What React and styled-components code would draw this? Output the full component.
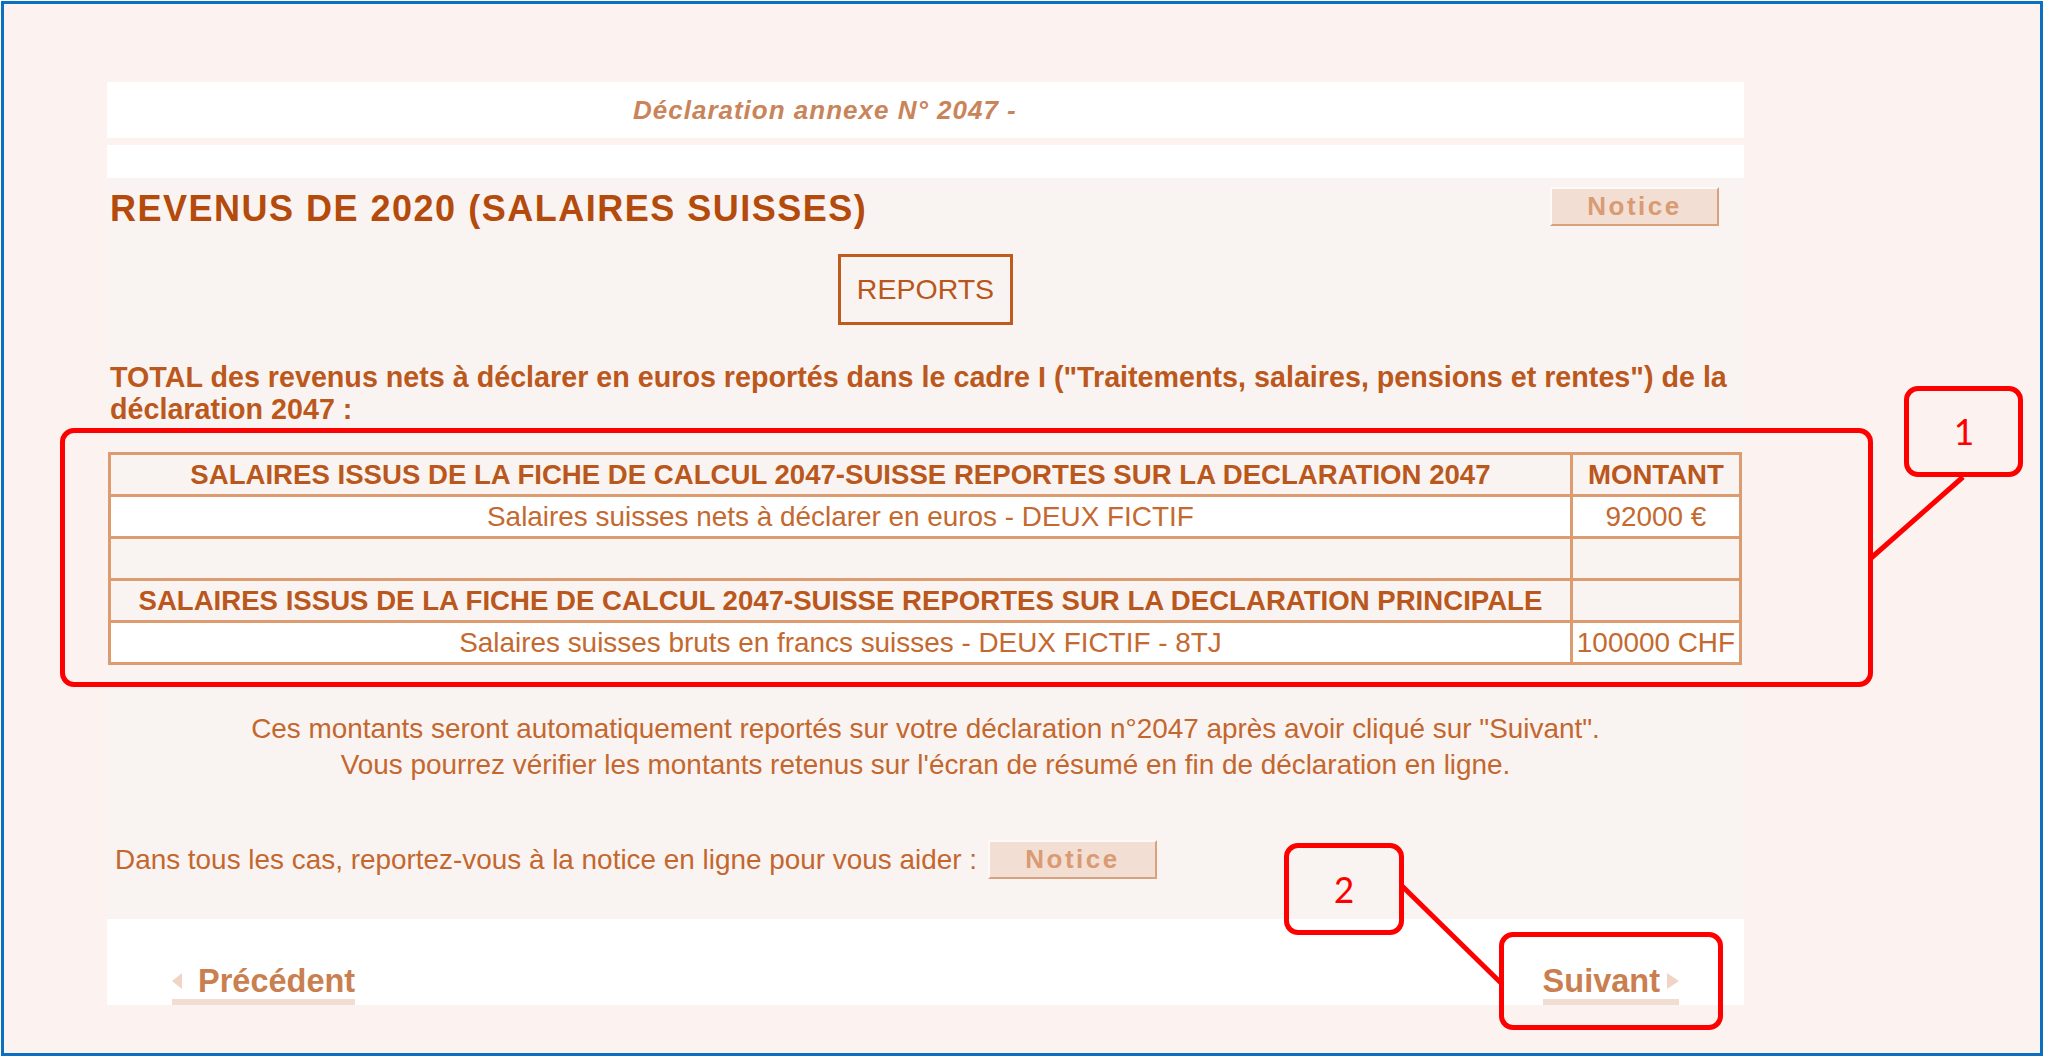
import React from "react";
import styled, { createGlobalStyle } from "styled-components";

const GlobalStyle = createGlobalStyle`
  body {
    margin: 0;
    background: #ffffff;
    font-family: "Liberation Sans", Arial, sans-serif;
  }
`;

const Frame = styled.div`
  position: relative;
  box-sizing: border-box;
  width: 2042px;
  height: 1055px;
  margin: 1px 0 0 1px;
  border: 3px solid #0b70c1;
  background: #fcf3f0;
  padding: 78px 0 0 103px;
`;

const Column = styled.div`
  width: 1637px;
  display: flex;
  flex-direction: column;
`;

const Band = styled.div`
  background: #ffffff;
  height: ${(p) => p.h}px;
  margin-top: ${(p) => p.mt || 0}px;
  display: flex;
  align-items: center;
`;

const DocTitle = styled.span`
  padding-left: 526px;
  font-size: 26px;
  letter-spacing: 1px;
  font-weight: bold;
  font-style: italic;
  color: #c9845a;
`;

const Content = styled.div`
  background: #f9f4f1;
  height: 741px;
  display: flex;
  flex-direction: column;
`;

const TitleRow = styled.div`
  display: flex;
  justify-content: space-between;
  align-items: flex-start;
  padding: 9px 25px 0 3px;
`;

const PageTitle = styled.h1`
  margin: 0;
  padding-top: 3px;
  font-size: 36px;
  letter-spacing: 1.5px;
  line-height: 38px;
  font-weight: bold;
  color: #b44a0c;
`;

const NoticeButton = styled.button`
  box-sizing: border-box;
  width: 169px;
  height: 39px;
  padding: 0;
  background: #f3ded3;
  border: 2px solid;
  border-color: #fffaf7 #d9a27f #d9a27f #fffaf7;
  font-family: "Liberation Sans", Arial, sans-serif;
  font-size: 26px;
  font-weight: bold;
  letter-spacing: 2.5px;
  color: #d99b74;
`;

const ReportsBox = styled.div`
  box-sizing: border-box;
  align-self: center;
  width: 175px;
  height: 71px;
  margin-top: 26px;
  border: 3px solid #bf5b1c;
  display: flex;
  align-items: center;
  justify-content: center;
  font-size: 28.5px;
  color: #b9561a;
`;

const Lead = styled.p`
  margin: 36px 0 0;
  padding-left: 3px;
  font-size: 28.7px;
  line-height: 32px;
  font-weight: bold;
  color: #bc581c;
`;

const Table = styled.table`
  margin: 27px 0 0 1px;
  width: 1634px;
  border-collapse: collapse;
`;

const Cell = styled.td`
  height: 39px;
  padding: 0 4px;
  border: 3px solid #dc9c70;
  text-align: center;
  white-space: nowrap;
  background: ${(p) => (p.white ? "#ffffff" : "transparent")};
  font-size: ${(p) => (p.head ? 27.6 : 27.9)}px;
  font-weight: ${(p) => (p.head ? "bold" : "normal")};
  color: ${(p) => (p.head ? "#ba571c" : "#c4692f")};
  width: ${(p) => (p.w ? `${p.w}px` : "auto")};
`;

const Note = styled.p`
  margin: 46px 0 0;
  text-align: center;
  font-size: 27.9px;
  line-height: 36px;
  color: #c4672f;
`;

const HelpRow = styled.div`
  display: flex;
  align-items: center;
  gap: 11px;
  margin-top: 57px;
  padding-left: 8px;
  font-size: 27.9px;
  color: #c4672f;
`;

const Footer = styled.div`
  background: #ffffff;
  height: 86px;
  padding: 0 65px;
  display: flex;
  justify-content: space-between;
  align-items: flex-end;
`;

const NavLink = styled.a`
  display: flex;
  align-items: center;
  gap: ${(p) => p.gap}px;
  padding-bottom: 1px;
  border-bottom: 6px solid #f2ddd2;
  font-size: 32.5px;
  line-height: 34px;
  font-weight: bold;
  color: #c97f50;
  text-decoration: none;
`;

const Arrow = styled.span`
  width: 0;
  height: 0;
  border-top: 8px solid transparent;
  border-bottom: 8px solid transparent;
  ${(p) =>
    p.dir === "left"
      ? "border-right: 10px solid #f0d4c6;"
      : "border-left: 12px solid #f0d4c6;"}
`;

const Highlight = styled.div`
  position: absolute;
  box-sizing: border-box;
  left: ${(p) => p.x}px;
  top: ${(p) => p.y}px;
  width: ${(p) => p.w}px;
  height: ${(p) => p.h}px;
  border: 5px solid #ff0000;
  border-radius: 14px;
  display: flex;
  align-items: center;
  justify-content: center;
  font-family: "Carlito", "Lato", "Liberation Sans", sans-serif;
  font-weight: 300;
  font-size: 40px;
  color: #ff0000;
  pointer-events: none;
`;

const Connectors = styled.svg`
  position: absolute;
  left: 0;
  top: 0;
  width: 2036px;
  height: 1049px;
  pointer-events: none;
`;

export default function App() {
  return (
    <>
      <GlobalStyle />
      <Frame>
        <Column>
          <Band h={56}>
            <DocTitle>Déclaration annexe N° 2047 -</DocTitle>
          </Band>
          <Band h={33} mt={7} />
          <Content>
            <TitleRow>
              <PageTitle>REVENUS DE 2020 (SALAIRES SUISSES)</PageTitle>
              <NoticeButton>Notice</NoticeButton>
            </TitleRow>
            <ReportsBox>REPORTS</ReportsBox>
            <Lead>
              TOTAL des revenus nets à déclarer en euros reportés dans le cadre I
              ("Traitements, salaires, pensions et rentes") de la
              <br />
              déclaration 2047 :
            </Lead>
            <Table>
              <tbody>
                <tr>
                  <Cell head>
                    SALAIRES ISSUS DE LA FICHE DE CALCUL 2047-SUISSE REPORTES SUR LA
                    DECLARATION 2047
                  </Cell>
                  <Cell head w={157}>
                    MONTANT
                  </Cell>
                </tr>
                <tr>
                  <Cell white>
                    Salaires suisses nets à déclarer en euros - DEUX FICTIF
                  </Cell>
                  <Cell white>92000 €</Cell>
                </tr>
                <tr>
                  <Cell />
                  <Cell />
                </tr>
                <tr>
                  <Cell head>
                    SALAIRES ISSUS DE LA FICHE DE CALCUL 2047-SUISSE REPORTES SUR LA
                    DECLARATION PRINCIPALE
                  </Cell>
                  <Cell />
                </tr>
                <tr>
                  <Cell white>
                    Salaires suisses bruts en francs suisses - DEUX FICTIF - 8TJ
                  </Cell>
                  <Cell white>100000 CHF</Cell>
                </tr>
              </tbody>
            </Table>
            <Note>
              Ces montants seront automatiquement reportés sur votre déclaration
              n°2047 après avoir cliqué sur "Suivant".
              <br />
              Vous pourrez vérifier les montants retenus sur l'écran de résumé en
              fin de déclaration en ligne.
            </Note>
            <HelpRow>
              <span>
                Dans tous les cas, reportez-vous à la notice en ligne pour vous aider :
              </span>
              <NoticeButton>Notice</NoticeButton>
            </HelpRow>
          </Content>
          <Footer>
            <NavLink href="#" gap={16}>
              <Arrow dir="left" />
              Précédent
            </NavLink>
            <NavLink href="#" gap={7}>
              Suivant
              <Arrow dir="right" />
            </NavLink>
          </Footer>
        </Column>

        <Highlight x={56} y={424} w={1813} h={259} />
        <Highlight x={1900} y={382} w={119} h={91}>
          1
        </Highlight>
        <Highlight x={1280} y={839} w={120} h={92}>
          2
        </Highlight>
        <Highlight x={1495} y={928} w={224} h={98} />
        <Connectors viewBox="0 0 2036 1049">
          <line x1="1959" y1="473" x2="1866" y2="555" stroke="#ff0000" strokeWidth="5" />
          <line x1="1398" y1="882" x2="1497" y2="979" stroke="#ff0000" strokeWidth="5" />
        </Connectors>
      </Frame>
    </>
  );
}
